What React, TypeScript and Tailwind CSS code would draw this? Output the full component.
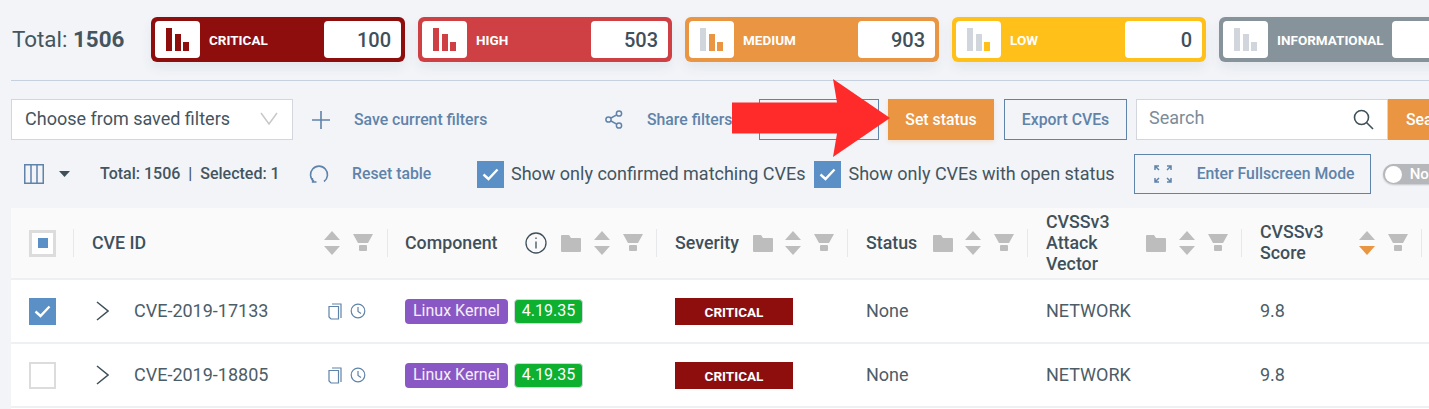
import { ReactNode } from 'react';

const severityCards = [
  { label: 'CRITICAL', count: '100', frame: 'bg-[#8e0e0e]', bars: ['#8e0e0e', '#8e0e0e', '#8e0e0e'] },
  { label: 'HIGH', count: '503', frame: 'bg-[#cf4044]', bars: ['#cf4044', '#cf4044', '#cf4044'] },
  { label: 'MEDIUM', count: '903', frame: 'bg-[#ea9541]', bars: ['#d0d6dc', '#ea9541', '#ea9541'] },
  { label: 'LOW', count: '0', frame: 'bg-[#ffc01a]', bars: ['#d0d6dc', '#d0d6dc', '#ffc01a'] },
  { label: 'INFORMATIONAL', count: '0', frame: 'bg-[#87939a]', bars: ['#d0d6dc', '#d0d6dc', '#d0d6dc'] },
];

const BarsIcon = ({ bars }: { bars: string[] }) => (
  <svg width="24" height="24" viewBox="0 0 24 24">
    <rect x="0" y="0" width="6" height="23" fill={bars[0]} />
    <rect x="9" y="6" width="6" height="17" fill={bars[1]} />
    <rect x="17" y="14" width="6" height="9" fill={bars[2]} />
  </svg>
);

const SortIcon = ({ active = false }: { active?: boolean }) => (
  <svg width="16" height="24" viewBox="0 0 16 24" className="shrink-0">
    <path d="M8 0l8 9H0z" fill="#bdbdbd" />
    <path d="M0 15h16l-8 9z" fill={active ? '#ea9541' : '#bdbdbd'} />
  </svg>
);

const FilterIcon = () => (
  <svg width="20" height="18" viewBox="0 0 20 18" className="shrink-0">
    <path d="M0 0h20l-5 9H5z" fill="#bdbdbd" />
    <rect x="6" y="11" width="8" height="6" rx="1" fill="#bdbdbd" />
  </svg>
);

const FolderIcon = () => (
  <svg width="20" height="17" viewBox="0 0 20 17" className="shrink-0">
    <path d="M0 1a1 1 0 011-1h7l2 3h9a1 1 0 011 1v12a1 1 0 01-1 1H1a1 1 0 01-1-1z" fill="#bdbdbd" />
  </svg>
);

const CheckMark = () => (
  <svg width="17" height="13" viewBox="0 0 17 13" fill="none">
    <path d="M1.5 6.5l5 4.5 9-9.5" stroke="#fff" strokeWidth="2.4" />
  </svg>
);

const Divider = () => <div className="h-[28px] w-px shrink-0 bg-[#e6e8eb]" />;

const Blue = ({ children, className = '' }: { children: ReactNode; className?: string }) => (
  <span className={`shrink-0 text-[15.8px] font-medium whitespace-nowrap text-[#5f83a9] ${className}`}>{children}</span>
);

const OptionCheck = ({ label }: { label: string }) => (
  <div className="flex shrink-0 items-center gap-[7px]">
    <div className="flex h-[27px] w-[27px] items-center justify-center bg-[#5a90c5]">
      <CheckMark />
    </div>
    <span className="-mt-[1px] text-[18px] whitespace-nowrap text-[#44555f]">{label}</span>
  </div>
);

const HeaderCell = ({ width, children }: { width: string; children: ReactNode }) => (
  <div className={`flex h-full shrink-0 items-center ${width}`}>
    <Divider />
    {children}
  </div>
);

const Title = ({ children, className = '' }: { children: ReactNode; className?: string }) => (
  <span className={`-mt-[2px] text-[17.8px] leading-[21px] font-medium text-[#3f505b] ${className}`}>{children}</span>
);

const TableRow = ({ id, checked }: { id: string; checked: boolean }) => (
  <div className="flex h-[64px] items-center border-b-2 border-[#eef0f2] bg-white text-[18px] text-[#4c5d68]">
    <div className="flex w-[62px] shrink-0 justify-center pl-[1px]">
      {checked ? (
        <div className="flex h-[27px] w-[27px] items-center justify-center bg-[#5a90c5]">
          <CheckMark />
        </div>
      ) : (
        <div className="h-[27px] w-[27px] border-2 border-[#dcdcdc]" />
      )}
    </div>
    <div className="flex w-[314px] shrink-0 items-center pl-[23px]">
      <svg width="13" height="20" viewBox="0 0 13 20" fill="none">
        <path d="M1 1l11 9-11 9" stroke="#3f505b" strokeWidth="1.5" />
      </svg>
      <span className="-mt-[2px] ml-[25px] w-[194px] whitespace-nowrap">{id}</span>
      <svg width="14" height="17" viewBox="0 0 14 17" fill="none" stroke="#5f83a9" strokeWidth="1.2">
        <path d="M4 1h9v14M1 3.5h9.5V16H3l-2-2z" />
      </svg>
      <svg width="16" height="16" viewBox="0 0 16 16" fill="none" stroke="#5f83a9" strokeWidth="1.2" className="ml-[8px]">
        <circle cx="8" cy="8" r="6.8" />
        <path d="M8 4v4.5l3 2" />
      </svg>
    </div>
    <div className="flex w-[269px] shrink-0 items-center gap-[6px] pl-[18px] text-[16px]">
      <span className="flex h-[25px] w-[103px] items-center justify-center rounded-[4px] bg-[#8a58c4] text-[#f4eefb]">Linux Kernel</span>
      <span className="flex h-[25px] w-[69px] items-center justify-center rounded-[4px] border border-[#cfd8dc] bg-[#0eb02f] text-white">4.19.35</span>
    </div>
    <div className="w-[191px] shrink-0 pl-[19px]">
      <div className="flex h-[27px] w-[118px] items-center justify-center bg-[#8e0e0e] pt-[2px] text-[13.5px] font-bold text-white">CRITICAL</div>
    </div>
    <div className="-mt-[2px] w-[180px] shrink-0 pl-[19px]">None</div>
    <div className="-mt-[2px] w-[214px] shrink-0 pl-[19px]">NETWORK</div>
    <div className="-mt-[2px] pl-[19px]">9.8</div>
  </div>
);

export default function App() {
  return (
    <div className="relative h-[409px] w-[1429px] overflow-hidden bg-[#f2f4f8] font-['Roboto',sans-serif]">
      <div className="ml-[11px] flex h-[81px] items-start border-b border-[#c5d0e0] pt-[17px] pl-[1px]">
        <div className="flex h-[45px] w-[139px] shrink-0 items-center text-[22.4px] text-[#44555f]">
          Total:&nbsp;<span className="font-bold">1506</span>
        </div>
        <div className="flex gap-[13px]">
          {severityCards.map((card) => (
            <div
              key={card.label}
              className={`flex h-[45px] w-[254px] shrink-0 items-stretch rounded-[6px] border-4 border-transparent shadow-[0_6px_12px_rgba(60,70,90,0.07)] ${card.frame}`}
            >
              <div className="flex w-[45px] shrink-0 items-center justify-center rounded-[4px] bg-white">
                <BarsIcon bars={card.bars} />
              </div>
              <span className="mt-[1px] ml-[9px] flex-1 self-center text-[13.5px] font-bold whitespace-nowrap text-white">{card.label}</span>
              <div className="flex w-[77px] shrink-0 items-center justify-end rounded-[4px] bg-white pr-[10px] text-[20px] font-medium text-[#3f505b]">
                {card.count}
              </div>
            </div>
          ))}
        </div>
      </div>

      <div className="mt-[18px] flex h-[41px] items-center pl-[11px]">
        <div className="flex h-[41px] w-[282px] shrink-0 items-center justify-between border-[1.5px] border-[#d3d6dc] bg-white pr-[14px] pb-[2px] pl-[13px] text-[18px] text-[#44555f]">
          Choose from saved filters
          <svg width="18" height="13" viewBox="0 0 18 13" fill="none">
            <path d="M1 1l8 11 8-11" stroke="#c8c8c8" strokeWidth="1.5" />
          </svg>
        </div>
        <svg width="18" height="18" viewBox="0 0 18 18" fill="none" className="ml-[19px] shrink-0">
          <path d="M9 0v18M0 9h18" stroke="#5f83a9" strokeWidth="1.6" />
        </svg>
        <Blue className="ml-[24px] w-[133px]">Save current filters</Blue>
        <svg width="18" height="19" viewBox="0 0 18 19" fill="none" stroke="#5f83a9" strokeWidth="1.5" className="ml-[118px] shrink-0">
          <circle cx="3.5" cy="9.5" r="2.6" />
          <circle cx="14" cy="3.5" r="2.6" />
          <circle cx="14" cy="15.5" r="2.6" />
          <path d="M6 8l5.7-3.2M6 11l5.7 3.2" />
        </svg>
        <Blue className="ml-[24px] w-[112px]">Share filters</Blue>
        <div className="h-[41px] w-[120px] shrink-0 border border-[#5f83a9]" />
        <div className="ml-[9px] flex h-[41px] w-[106px] shrink-0 items-center justify-center bg-[#ea9541] text-[15.8px] font-medium text-white shadow-[0_2px_4px_rgba(234,149,65,0.2)]">
          Set status
        </div>
        <div className="ml-[10px] flex h-[41px] w-[123px] shrink-0 items-center justify-center border border-[#5f83a9]">
          <Blue>Export CVEs</Blue>
        </div>
        <div className="ml-[9px] flex h-[41px] w-[252px] shrink-0 items-center justify-between border-[1.5px] border-[#d3d6dc] bg-white pr-[13px] pl-[12px] text-[18px] text-[#7c8c98]">
          <span className="-mt-[4px]">Search</span>
          <svg width="21" height="21" viewBox="0 0 21 21" fill="none" stroke="#3f505b" strokeWidth="1.6">
            <circle cx="8.5" cy="8.5" r="7" />
            <path d="M13.5 13.5l6.5 6.5" />
          </svg>
        </div>
        <div className="flex h-[41px] w-[100px] shrink-0 items-center bg-[#ea9541] pl-[18px] text-[15.8px] font-medium text-white">Search</div>
      </div>

      <div className="mt-[14px] flex h-[40px] items-center pl-[24px]">
        <svg width="20" height="20" viewBox="0 0 20 20" fill="none" stroke="#5f83a9" strokeWidth="1.5" className="shrink-0">
          <path d="M.75.75h18.5v18.5H.75zM7 .75v18.5M13 .75v18.5" />
        </svg>
        <svg width="11" height="6" viewBox="0 0 11 6" className="ml-[15px] shrink-0">
          <path d="M0 0h11L5.5 6z" fill="#3f505b" />
        </svg>
        <span className="ml-[30px] w-[209px] shrink-0 text-[16px] font-medium whitespace-nowrap text-[#44555f]">
          Total: 1506 &nbsp;|&nbsp; Selected: 1
        </span>
        <svg width="20" height="20" viewBox="0 0 20 20" fill="none" stroke="#5f83a9" strokeWidth="1.6" className="shrink-0">
          <path d="M5 17.5a8.5 8.5 0 1110 0" />
          <path d="M3.5 14v4h4" strokeWidth="1.3" />
        </svg>
        <Blue className="ml-[23px] w-[125px]">Reset table</Blue>
        <OptionCheck label="Show only confirmed matching CVEs" />
        <div className="ml-[9px]">
          <OptionCheck label="Show only CVEs with open status" />
        </div>
        <div className="ml-[19px] flex h-[40px] w-[237px] shrink-0 items-center border border-[#5f83a9] pl-[19px]">
          <svg width="18" height="18" viewBox="0 0 18 18" fill="none" stroke="#5f83a9" strokeWidth="1.5" className="shrink-0">
            <path d="M1 5V1h4M1 1l4 4M13 1h4v4M17 1l-4 4M1 13v4h4M1 17l4-4M17 13v4h-4M17 17l-4-4" />
          </svg>
          <Blue className="ml-[25px]">Enter Fullscreen Mode</Blue>
        </div>
        <div className="ml-[12px] flex h-[20px] w-[80px] shrink-0 items-center rounded-full bg-[#b5b7ba] pl-[2px] shadow-[0_1px_2px_rgba(0,0,0,0.2)]">
          <div className="h-[17px] w-[17px] rounded-full bg-white" />
          <span className="ml-[8px] text-[15px] font-medium text-white">No</span>
        </div>
      </div>

      <div className="mt-[14px] ml-[11px] w-[1500px]">
        <div className="flex h-[72px] items-center border-b-2 border-[#eef0f2] bg-[#fafafa]">
          <div className="flex w-[62px] shrink-0 justify-center pl-[1px]">
            <div className="flex h-[27px] w-[27px] items-center justify-center border-[3px] border-[#dcdcdc] bg-white">
              <div className="h-[10px] w-[10px] bg-[#5a90c5]" />
            </div>
          </div>
          <HeaderCell width="w-[314px]">
            <Title className="ml-[18px] flex-1">CVE ID</Title>
            <SortIcon />
            <div className="mr-[14px] ml-[13px]"><FilterIcon /></div>
          </HeaderCell>
          <HeaderCell width="w-[269px]">
            <Title className="ml-[17px] w-[120px]">Component</Title>
            <svg width="22" height="22" viewBox="0 0 22 22" fill="none" stroke="#3f505b" strokeWidth="1.3" className="shrink-0">
              <circle cx="11" cy="11" r="10" />
              <path d="M11 9.5v7M11 5.5v1.5" />
            </svg>
            <div className="ml-[14px]"><FolderIcon /></div>
            <div className="ml-[13px]"><SortIcon /></div>
            <div className="ml-[13px]"><FilterIcon /></div>
          </HeaderCell>
          <HeaderCell width="w-[191px]">
            <Title className="ml-[18px] w-[78px]">Severity</Title>
            <FolderIcon />
            <div className="ml-[12px]"><SortIcon /></div>
            <div className="ml-[13px]"><FilterIcon /></div>
          </HeaderCell>
          <HeaderCell width="w-[180px]">
            <Title className="ml-[18px] w-[67px]">Status</Title>
            <FolderIcon />
            <div className="ml-[12px]"><SortIcon /></div>
            <div className="ml-[13px]"><FilterIcon /></div>
          </HeaderCell>
          <HeaderCell width="w-[214px]">
            <Title className="ml-[18px] w-[100px]">CVSSv3 Attack Vector</Title>
            <FolderIcon />
            <div className="ml-[13px]"><SortIcon /></div>
            <div className="ml-[13px]"><FilterIcon /></div>
          </HeaderCell>
          <HeaderCell width="w-[180px]">
            <Title className="ml-[18px] w-[99px]">CVSSv3 Score</Title>
            <SortIcon active />
            <div className="ml-[13px]"><FilterIcon /></div>
          </HeaderCell>
          <Divider />
        </div>
        <TableRow id="CVE-2019-17133" checked />
        <TableRow id="CVE-2019-18805" checked={false} />
        <div className="h-[10px] bg-white" />
      </div>

      <svg width="160" height="80" viewBox="0 0 160 80" className="absolute top-[79px] left-[731px]">
        <path d="M1 23.5h105L102 0l57 39-57 39 4-23.5H1z" fill="#ff2a2a" />
      </svg>
    </div>
  );
}
